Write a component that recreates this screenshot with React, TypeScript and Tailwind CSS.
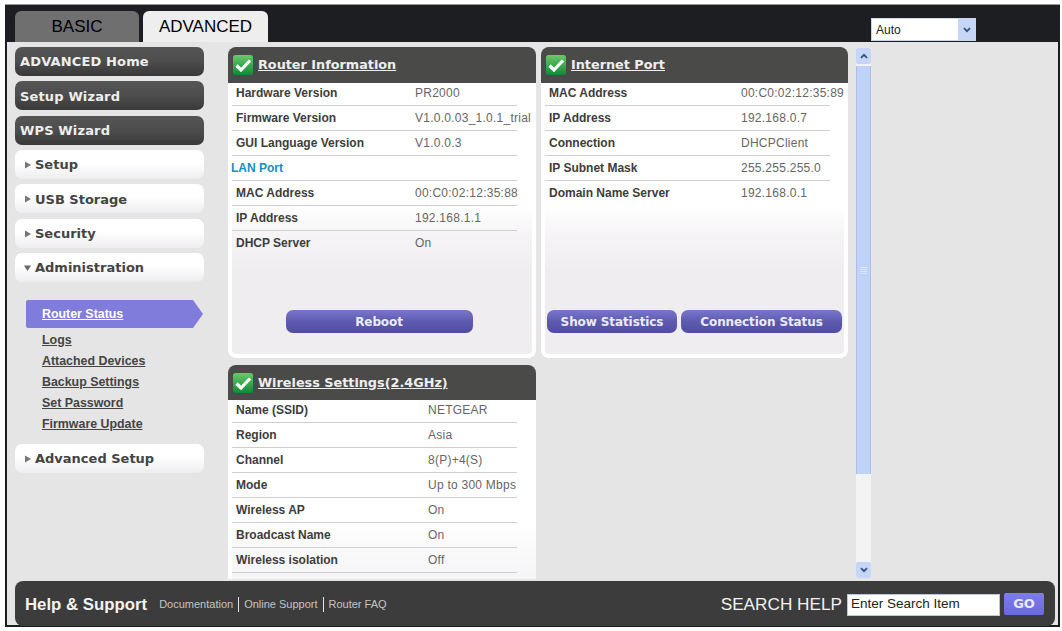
const sans = 'font-["Liberation_Sans",Arial,sans-serif]';
const wide = 'font-["DejaVu_Sans",Verdana,sans-serif]';

function CheckIcon() {
  return (
    <svg viewBox="0 0 20 20" className="h-5 w-5 shrink-0">
      <defs>
        <linearGradient id="checkBg" x1="0" y1="0" x2="0" y2="1">
          <stop offset="0" stopColor="#6cc86a" />
          <stop offset="1" stopColor="#0f8a36" />
        </linearGradient>
      </defs>
      <rect width="20" height="20" rx="2.5" fill="url(#checkBg)" />
      <path d="M3.5 10.5 L8 15 L17 5.5" fill="none" stroke="#fff" strokeWidth="3.2" />
    </svg>
  );
}

function Arrow({ open }: { open?: boolean }) {
  return (
    <svg viewBox="0 0 8 8" className="h-2 w-2 shrink-0">
      {open ? <path d="M0 1.5 H7 L3.5 7 Z" fill="#666" /> : <path d="M1 .5 L7 4 L1 7.5 Z" fill="#777" />}
    </svg>
  );
}

function DarkItem({ label }: { label: string }) {
  return (
    <div className={`flex h-[29px] items-center rounded-[7px] bg-[linear-gradient(#555_0%,#4d4d4d_50%,#393939_100%)] pl-[5px] pt-px text-[13px] font-bold tracking-[0.15px] text-[#eee] ${wide}`}>
      {label}
    </div>
  );
}

function LightItem({ label, open }: { label: string; open?: boolean }) {
  return (
    <div className={`flex h-[29px] items-center gap-[3px] rounded-[7px] bg-[linear-gradient(#fff_0%,#fff_45%,#eeecef_100%)] pl-[9px] pt-px text-[13px] font-bold text-[#444] ${wide}`}>
      <Arrow open={open} />
      {label}
    </div>
  );
}

function SubLink({ label }: { label: string }) {
  return <div className="h-[21px] pl-[16px] text-[12.4px] font-bold leading-[21px] text-[#444] underline">{label}</div>;
}

type RowData = { label: string; value?: string; lan?: boolean; plain?: boolean };

function Rows({ rows, labelWidth }: { rows: RowData[]; labelWidth: string }) {
  return (
    <div className="flex flex-col">
      {rows.map((row) => (
        <div
          key={row.label}
          className={`flex h-[25px] w-[285px] items-end whitespace-nowrap text-[12px] leading-[14px] first:h-[23px] ${row.plain ? 'pb-[6px]' : 'border-b border-[#cfcfcf] pb-[5px]'}`}
        >
          {row.lan ? (
            <span className="-ml-[1px] font-bold text-[#1190c4]">{row.label}</span>
          ) : (
            <>
              <span className={`${labelWidth} shrink-0 pl-[4px] font-bold text-[#3d3d3d]`}>{row.label}</span>
              <span className="tracking-[0.25px] text-[#666]">{row.value}</span>
            </>
          )}
        </div>
      ))}
    </div>
  );
}

function PanelHeader({ title, short }: { title: string; short?: boolean }) {
  return (
    <div className={`flex shrink-0 items-center gap-[5px] rounded-t-[8px] bg-[#4a4a48] pl-[5px] ${short ? 'h-[35px]' : 'h-[36px]'}`}>
      <CheckIcon />
      <span className={`text-[12.8px] font-bold text-[#eee] underline ${wide}`}>{title}</span>
    </div>
  );
}

function PurpleButton({ label, width }: { label: string; width: string }) {
  return (
    <div className={`flex h-[23px] ${width} items-center justify-center rounded-[7px] bg-[linear-gradient(#7977cb_0%,#5d5ab0_50%,#504da0_100%)] text-[12px] font-bold tracking-[-0.1px] text-[#ecebfa] ${wide}`}>
      {label}
    </div>
  );
}

function Panel({ title, rows, labelWidth, buttons }: { title: string; rows: RowData[]; labelWidth: string; buttons: React.ReactNode }) {
  return (
    <div className="flex h-[311px] shrink-0 flex-col">
      <PanelHeader title={title} />
      <div className="flex flex-1 flex-col justify-between rounded-b-[8px] border-x-[4px] border-b-[4px] border-white bg-[linear-gradient(#fff_46%,#f6f4f6_56%,#efedf0_70%)] pb-[21px]">
        <Rows rows={rows} labelWidth={labelWidth} />
        {buttons}
      </div>
    </div>
  );
}

const routerRows: RowData[] = [
  { label: 'Hardware Version', value: 'PR2000' },
  { label: 'Firmware Version', value: 'V1.0.0.03_1.0.1_trial' },
  { label: 'GUI Language Version', value: 'V1.0.0.3' },
  { label: 'LAN Port', lan: true },
  { label: 'MAC Address', value: '00:C0:02:12:35:88' },
  { label: 'IP Address', value: '192.168.1.1' },
  { label: 'DHCP Server', value: 'On', plain: true },
];

const internetRows: RowData[] = [
  { label: 'MAC Address', value: '00:C0:02:12:35:89' },
  { label: 'IP Address', value: '192.168.0.7' },
  { label: 'Connection', value: 'DHCPClient' },
  { label: 'IP Subnet Mask', value: '255.255.255.0' },
  { label: 'Domain Name Server', value: '192.168.0.1', plain: true },
];

const wirelessRows: RowData[] = [
  { label: 'Name (SSID)', value: 'NETGEAR' },
  { label: 'Region', value: 'Asia' },
  { label: 'Channel', value: '8(P)+4(S)' },
  { label: 'Mode', value: 'Up to 300 Mbps' },
  { label: 'Wireless AP', value: 'On' },
  { label: 'Broadcast Name', value: 'On' },
  { label: 'Wireless isolation', value: 'Off' },
];

function Chevron({ up }: { up?: boolean }) {
  return (
    <svg viewBox="0 0 10 8" className="h-[6px] w-2">
      <path d={up ? 'M1 6.5 L5 2.5 L9 6.5' : 'M1 1.5 L5 5.5 L9 1.5'} fill="none" stroke="#36507f" strokeWidth="2.4" />
    </svg>
  );
}

function Scrollbar() {
  return (
    <div className="mt-px flex h-[530px] w-[15px] flex-col bg-[#f3f2f4]">
      <div className="flex h-[16px] shrink-0 items-center justify-center rounded-[2px] bg-[#c5d6f7]">
        <Chevron up />
      </div>
      <div className="mt-[2px] flex h-[408px] items-center justify-center border-x border-[#aebfe6] bg-[#bfd2fa]">
        <div className="flex w-[7px] flex-col gap-px">
          <div className="h-px bg-[#dbe5fb]" />
          <div className="h-px bg-[#dbe5fb]" />
          <div className="h-px bg-[#dbe5fb]" />
          <div className="h-px bg-[#dbe5fb]" />
        </div>
      </div>
      <div className="flex-1" />
      <div className="flex h-[16px] shrink-0 items-center justify-center rounded-[2px] bg-[#c5d6f7]">
        <Chevron />
      </div>
    </div>
  );
}

export default function App() {
  return (
    <div className={`h-[631px] w-[1062px] overflow-hidden bg-white pb-[4px] pl-[5px] pr-[2px] pt-[4px] ${sans}`}>
      <div className="flex h-full flex-col border-x-2 border-b-2 border-[#1b1c1f]">
        <div className="-mx-[2px] flex h-[38px] shrink-0 items-end border-t border-[#999] bg-[#1c1e22] pl-[10px]">
          <div className="flex h-[31px] w-[124px] items-center justify-center rounded-t-[6px] bg-[#6f6f6f] pt-px text-[17px] text-black">BASIC</div>
          <div className="ml-[4px] flex h-[31px] w-[125px] items-center justify-center rounded-t-[6px] bg-[#eeeeee] pt-px text-[17px] text-black">ADVANCED</div>
          <div className="mb-px ml-[603px] flex h-[23px] w-[105px] items-center justify-between self-end border border-[#c9d6ea] bg-white pl-[4px] text-[12px] text-[#222]">
            Auto
            <div className="flex h-full w-[17px] items-center justify-center bg-[#c5d6f7]">
              <Chevron />
            </div>
          </div>
        </div>
        <div className="flex min-h-0 flex-1 flex-col bg-[#e5e5e5] pl-[8px] pr-[3px]">
          <div className="flex h-[539px] shrink-0 overflow-hidden pb-[2px] pt-[5px]">
            <div className="flex w-[189px] shrink-0 flex-col">
              <div className="flex flex-col gap-[5.33px]">
                <DarkItem label="ADVANCED Home" />
                <DarkItem label="Setup Wizard" />
                <DarkItem label="WPS Wizard" />
                <LightItem label="Setup" />
                <LightItem label="USB Storage" />
                <LightItem label="Security" />
                <LightItem label="Administration" open />
              </div>
              <div className="ml-[11px] mt-[18px] flex h-[28px] w-[177px] items-center rounded-l-[2px] bg-[#7f7cdb] pl-[16px] text-[12.4px] font-bold text-white underline [clip-path:polygon(0_0,167px_0,100%_50%,167px_100%,0_100%)]">
                Router Status
              </div>
              <div className="ml-[11px] mt-[2px]">
                <SubLink label="Logs" />
                <SubLink label="Attached Devices" />
                <SubLink label="Backup Settings" />
                <SubLink label="Set Password" />
                <SubLink label="Firmware Update" />
              </div>
              <div className="mt-[9px]">
                <LightItem label="Advanced Setup" />
              </div>
            </div>
            <div className="ml-[24px] flex w-[308px] shrink-0 flex-col gap-[7px]">
              <Panel
                title="Router Information"
                rows={routerRows}
                labelWidth="w-[183px]"
                buttons={
                  <div className="flex justify-center pr-[6px]">
                    <PurpleButton label="Reboot" width="w-[187px]" />
                  </div>
                }
              />
              <div className="h-[214px] shrink-0 overflow-hidden">
                <PanelHeader title="Wireless Settings(2.4GHz)" short />
                <div className="h-[200px] border-l-[4px] border-white bg-[linear-gradient(#fff_62%,#f1eff2_100%)]">
                  <Rows rows={wirelessRows} labelWidth="w-[196px]" />
                </div>
              </div>
            </div>
            <div className="ml-[5px] w-[307px] shrink-0">
              <Panel
                title="Internet Port"
                rows={internetRows}
                labelWidth="w-[196px]"
                buttons={
                  <div className="flex gap-[4px] pl-[2px]">
                    <PurpleButton label="Show Statistics" width="w-[130px]" />
                    <PurpleButton label="Connection Status" width="w-[161px]" />
                  </div>
                }
              />
            </div>
            <div className="ml-[8px] shrink-0">
              <Scrollbar />
            </div>
          </div>
          <div className="flex h-[45px] shrink-0 items-center rounded-[8px] bg-[#3c3c3c] pl-[10px] pt-[2px]">
            <span className="text-[16.8px] font-bold text-[#f2f2f2]">Help &amp; Support</span>
            <span className="ml-[12px] flex items-center text-[11px] text-[#c4c4c4]">
              Documentation
              <span className="mx-[5px] h-[15px] w-px bg-[#e5e5e5]" />
              Online Support
              <span className="mx-[5px] h-[15px] w-px bg-[#e5e5e5]" />
              Router FAQ
            </span>
            <span className="ml-auto text-[17.2px] text-[#f2f2f2]">SEARCH HELP</span>
            <div className="ml-[5px] flex h-[22px] w-[153px] items-center border border-[#b9c8e0] bg-white pl-[3px] text-[13.5px] text-[#222]">Enter Search Item</div>
            <div className={`mb-[2px] ml-[4px] mr-[11px] flex h-[22px] w-[40px] items-center justify-center rounded-[2px] bg-[linear-gradient(#7f7dea,#6a68de)] text-[13px] font-bold text-[#e8e8ff] ${wide}`}>GO</div>
          </div>
        </div>
      </div>
    </div>
  );
}
